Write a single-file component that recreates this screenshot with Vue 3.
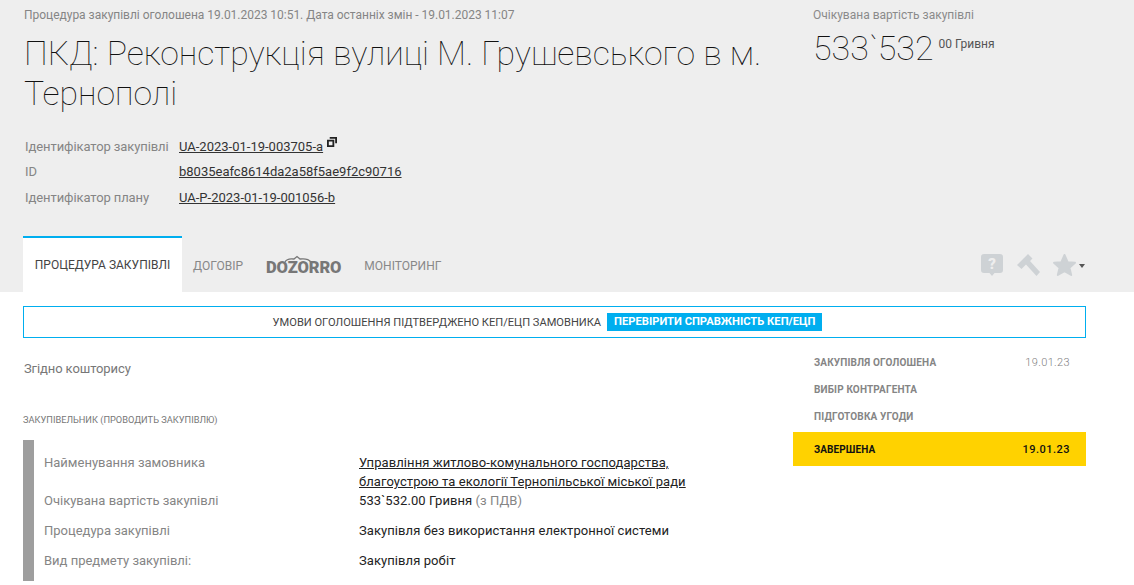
<script setup>
const ids = [
  { label: 'Ідентифікатор закупівлі', value: 'UA-2023-01-19-003705-a', copy: true },
  { label: 'ID', value: 'b8035eafc8614da2a58f5ae9f2c90716' },
  { label: 'Ідентифікатор плану', value: 'UA-P-2023-01-19-001056-b' }
]
const steps = [
  { name: 'Закупівля оголошена', date: '19.01.23' },
  { name: 'Вибір контрагента', date: '' },
  { name: 'Підготовка угоди', date: '' },
  { name: 'Завершена', date: '19.01.23', active: true }
]
</script>

<template>
  <div class="page">
    <header class="head">
      <div class="top">
        <div class="main">
          <p class="meta">Процедура закупівлі оголошена 19.01.2023 10:51. Дата останніх змін - 19.01.2023 11:07</p>
          <h1 class="title">ПКД: Реконструкція вулиці М. Грушевського в м. Тернополі</h1>
        </div>
        <div class="price">
          <p class="price-label">Очікувана вартість закупівлі</p>
          <p class="price-value">533`532<span class="price-sup">00 Гривня</span></p>
        </div>
      </div>
      <dl class="ids">
        <div v-for="row in ids" :key="row.label" class="id-row">
          <dt>{{ row.label }}</dt>
          <dd>
            <a>{{ row.value }}</a>
            <svg v-if="row.copy" class="copy" width="10" height="10" viewBox="0 0 11 11">
              <path d="M3 0h8v7H9V2H3z" fill="#222" />
              <path d="M0 3h8v8H0zM2 5v4h4V5z" fill="#222" fill-rule="evenodd" />
            </svg>
          </dd>
        </div>
      </dl>
      <nav class="tabs">
        <a class="tab active">Процедура закупівлі</a>
        <a class="tab tab-dogovir">Договір</a>
        <span class="dozorro">
          DOZORRO
          <svg class="dz-mark" width="30" height="8" viewBox="0 0 30 8">
            <path d="M2 7 Q4 3 11 4 L14 1.500 L17 4 Q25 3 28 7" fill="none" stroke="#777" stroke-width="1.300" />
          </svg>
        </span>
        <a class="tab tab-mon">Моніторинг</a>
        <div class="tools">
          <svg class="t-q" width="22" height="22" viewBox="0 0 22 22">
            <path d="M3 0h16a3 3 0 0 1 3 3v13a3 3 0 0 1-3 3h-5.500L11 22l-2.500-3H3a3 3 0 0 1-3-3V3a3 3 0 0 1 3-3z" fill="#ced2d5" />
            <text x="11" y="15" text-anchor="middle" class="q">?</text>
          </svg>
          <svg class="t-h" width="23" height="22" viewBox="0 0 23 22">
            <path d="M0 11L11 0l4.500 4.500L13 7l10 11-3.500 4L9 10.500 4.500 15z" fill="#ced2d5" />
          </svg>
          <svg class="t-s" width="23" height="22" viewBox="0 0 24 23">
            <path d="M12 1l3.300 7.500 7.700.7-5.800 5.100 1.800 7.700-7-4.100-7 4.100 1.800-7.700L1 9.200l7.700-.7z" fill="#ced2d5" stroke="#ced2d5" stroke-width="2" stroke-linejoin="round" />
          </svg>
          <span class="caret"></span>
        </div>
      </nav>
    </header>

    <div class="body">
      <div class="notice">
        <span>Умови оголошення підтверджено КЕП/ЕЦП замовника</span>
        <a class="check">Перевірити справжність КЕП/ЕЦП</a>
      </div>
      <div class="cols">
        <main class="content">
          <p class="desc">Згідно кошторису</p>
          <h2 class="sub">Закупівельник (проводить закупівлю)</h2>
          <div class="info">
            <div class="info-row r1">
              <span class="k">Найменування замовника</span>
              <a class="v link">Управління житлово-комунального господарства, благоустрою та екології Тернопільської міської ради</a>
            </div>
            <div class="info-row r2">
              <span class="k">Очікувана вартість закупівлі</span>
              <span class="v">533`532.00 Гривня <span class="vat">(з ПДВ)</span></span>
            </div>
            <div class="info-row r3">
              <span class="k">Процедура закупівлі</span>
              <span class="v">Закупівля без використання електронної системи</span>
            </div>
            <div class="info-row r4">
              <span class="k">Вид предмету закупівлі:</span>
              <span class="v">Закупівля робіт</span>
            </div>
          </div>
        </main>
        <aside class="steps">
          <div v-for="s in steps" :key="s.name" class="step" :class="{ on: s.active }">
            <span class="s-name">{{ s.name }}</span>
            <span class="s-date">{{ s.date }}</span>
          </div>
        </aside>
      </div>
    </div>
  </div>
</template>

<style>
html, body { margin: 0; padding: 0; background: #fff; overflow: hidden; }
</style>

<style scoped>
.page { width: 1134px; height: 585px; overflow: hidden; font-family: Roboto, "Liberation Sans", sans-serif; color: #222; }
p, h1, h2, dl, dd, dt { margin: 0; }
.head { background: #eee; height: 292px; box-sizing: border-box; padding: 0 48px 0 23px; display: flex; flex-direction: column; }
.top { display: flex; height: 128px; }
.main { width: 790px; padding-left: 1px; box-sizing: border-box; }
.meta { font-size: 12px; line-height: 14px; padding-top: 8px; color: #858585; letter-spacing: -0.02px; }
.title { font-size: 33.750px; font-weight: 100; line-height: 40px; margin-top: 12px; color: #111; width: 770px; }
.price-label { font-size: 12px; line-height: 14px; padding-top: 8px; color: #8a8a8a; }
.price-value { font-size: 34px; font-weight: 100; line-height: 40px; margin-top: 6px; color: #111; }
.price-sup { font-size: 12px; font-weight: 400; line-height: 11px; vertical-align: 12px; margin-left: 5px; color: #555; }
.ids { padding-left: 2px; margin-top: 5.500px; }
.id-row { display: flex; height: 25.500px; align-items: center; font-size: 13px; }
.id-row dt { width: 154px; color: #858585; letter-spacing: -0.1px; }
.id-row a { color: #333; text-decoration: underline; }
.copy { position: relative; top: -4px; margin-left: 4px; }
.tabs { display: flex; align-items: stretch; margin-top: auto; height: 56px; position: relative; }
.tab { font-size: 12px; text-transform: uppercase; color: #888; display: flex; align-items: center; padding-top: 4px; }
.tab.active { width: 159px; box-sizing: border-box; justify-content: center; background: #fff; border-top: 2px solid #00aeef; color: #444; padding-top: 0; }
.tab-dogovir { margin-left: 11px; }
.dozorro { position: relative; margin-left: 23px; font-size: 16.500px; font-weight: 900; color: #777; display: flex; align-items: center; letter-spacing: -0.1px; padding-top: 6px; }
.dz-mark { position: absolute; left: 17px; top: 19px; }
.tab-mon { margin-left: 23px; }
.tools { margin-left: auto; display: flex; align-items: center; padding-right: 1px; padding-top: 2px; }
.t-h { margin-left: 14px; }
.t-s { margin-left: 13px; }
.q { font-size: 15px; font-weight: 900; fill: #eee; }
.caret { width: 0; height: 0; border-left: 3.500px solid transparent; border-right: 3.500px solid transparent; border-top: 4px solid #555; margin-left: 3px; margin-top: 2px; }
.body { padding: 14px 48px 0 23px; }
.notice { height: 32px; box-sizing: border-box; border: 1px solid #00aeef; padding-right: 14px; display: flex; justify-content: center; align-items: center; gap: 6px; font-size: 11.100px; text-transform: uppercase; color: #444; }
.check { background: #00aeef; color: #fff; font-weight: 700; padding: 1px 7px; line-height: 16px; font-size: 11.200px; }
.cols { display: flex; justify-content: space-between; }
.content { width: 700px; }
.desc { font-size: 13px; line-height: 16px; margin-top: 23px; padding-left: 1px; color: #777; letter-spacing: -0.1px; }
.sub { font-size: 9.250px; font-weight: 400; line-height: 12px; margin-top: 37px; text-transform: uppercase; color: #777; }
.info { margin-top: 14px; border-left: 11px solid #9e9e9e; padding-left: 10px; height: 141px; box-sizing: border-box; padding-top: 13px; font-size: 13px; line-height: 19px; }
.info-row { display: flex; }
.k { width: 315px; flex: none; color: #858585; }
.v { width: 340px; color: #222; letter-spacing: 0.08px; }
.link { text-decoration: underline; }
.vat { color: #858585; }
.r3 { margin-top: 11px; }
.r4 { margin-top: 11px; }
.steps { width: 293px; margin-top: 11px; }
.step { display: flex; justify-content: space-between; align-items: center; height: 27px; padding: 0 16px 0 21px; font-size: 10px; font-weight: 700; text-transform: uppercase; color: #858585; letter-spacing: 0.15px; }
.s-date { font-size: 11px; font-weight: 300; color: #7f7f7f; letter-spacing: 0.35px; }
.step.on { background: #ffd200; height: 34px; margin-top: 2px; color: #111; letter-spacing: 0.1px; }
.step.on .s-date { font-weight: 500; color: #111; font-size: 11px; letter-spacing: 0.5px; }
</style>
